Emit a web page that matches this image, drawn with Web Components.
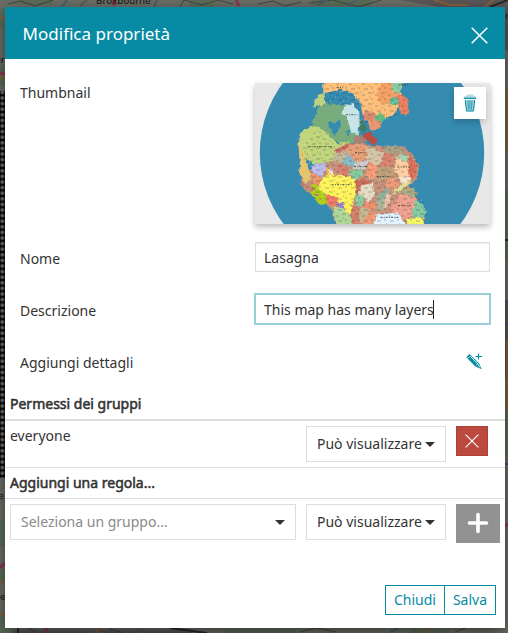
<!DOCTYPE html>
<html lang="it">
<head>
<meta charset="utf-8">
<title>Modifica proprietà</title>
<style>
html,body{margin:0;height:100%;overflow:hidden}
body{font:14px/20px "Noto Sans",sans-serif;color:#333;background:#5b5e55}
</style>
</head>
<body>
<property-page></property-page>
<script>
const define=(name,html)=>{
  const t=document.createElement('template');t.innerHTML=html;
  customElements.define(name,class extends HTMLElement{
    constructor(){super();this.attachShadow({mode:'open'}).append(t.content.cloneNode(true))}
  });
};

/* Dimmed street map behind the dialog */
define('map-backdrop',`<style>:host{display:block;width:508px;height:633px}svg{display:block}text{font:9.5px "DejaVu Sans",sans-serif;fill:#151515}</style>
<svg width="508" height="633" fill="none">
<defs><pattern id="d" width="4.6" height="5.6" patternUnits="userSpaceOnUse"><rect width="5" height="6" fill="#080808"/><circle cx="2.3" cy="2.8" r="1.9" fill="#707070"/></pattern></defs>
<rect width="508" height="633" fill="#6b6e66"/>
<path d="M0 8h5v20H0zM0 66h5v20H0zM20 0h32v4H20zM190 0h24v7h-24zM312 0h60v6h-60zM0 520h5v26H0zM0 570h5v12H0zM0 616h12v17H0zM505 190h3v70h-3zM505 395h3v60h-3zM225 629h70v4h-70zM410 629h40v4h-40z" fill="#5b6d59"/>
<path d="M400 0h108v50h-3V7H440zM505 300h3v80h-3zM12 630h180v3H12z" fill="#5b5658"/>
<path d="M8 4l12-3 15 5 18-6M80 6l7-6M180 7l4-7 18 5 16-5 15 4M258 4l15-3 12 5 16-4M309 3l24-3 25 7 23-7M28 628l10 5M110 629l12 4M300 632l16-4 20 4M455 632l11-4" stroke="#41463f"/>
<path d="M62 7l5-7M154 7l3-7M318 5l10-5M348 6l8-6M390 632l9-4M138 633l4-5" stroke="#49616b" stroke-width="2"/>
<path d="M0 17q5 0 5 7M0 80l5-8M434 0l16 5h18M484 7l10-7M0 585l5-7M0 613l14 5M96 633l5-6M507 90v60M507 340v70M426 633l3-6" stroke="#87613a" stroke-width="2"/>
<path d="M236 0l3 6M114 6V0M0 73l5 1M0 568l5-5M45 633l2-6M505 525h3" stroke="#8b3851" stroke-width="3"/>
<path d="M490 7l18-7M18 633v-5M170 628l37 5M505 240h3" stroke="#282a2b" stroke-width="2"/>
<path d="M505 302h3M505 324h3M505 464h3" stroke="#354f91" stroke-width="2"/>
<rect y="91" width="5" height="387" fill="url(#d)"/>
<text x="96" y="4">Broxbourne</text><text x="-5" y="63">er</text><text x="-2" y="499">e.</text><text x="0" y="600">e</text><text x="505" y="19">n</text>
</svg>`);

/* Circular political map used as the resource thumbnail */
define('map-thumbnail',`<style>:host{display:grid;width:235px;height:141px;box-shadow:0 3px 6px rgba(0,0,0,.16),0 3px 6px rgba(0,0,0,.12);box-sizing:border-box}svg{grid-area:1/1;display:block}.a{grid-area:1/1;justify-self:end;padding:4px;z-index:1}</style>
<svg width="235" height="141" viewBox="255 83 235 141">
<defs>
<pattern id="n" width="39" height="33" patternUnits="userSpaceOnUse"><path d="M0 6h12M21 12h9M9 24h6M27 27h12M15 3h3M3 18h3" stroke="#273238" stroke-width="3" stroke-opacity=".32"/><path d="M18 18h3M33 3h3M3 30h3" stroke="#fff6bd" stroke-width="3" stroke-opacity=".4"/></pattern>
<filter id="r" filterUnits="userSpaceOnUse" x="0" y="-20" width="430" height="480" color-interpolation-filters="sRGB"><feTurbulence type="fractalNoise" baseFrequency=".08" numOctaves="3" seed="8"/><feDisplacementMap in="SourceGraphic" scale="13" xChannelSelector="R" yChannelSelector="G"/></filter>
<clipPath id="c"><path d="M255 83h235v141H255z"/></clipPath>
</defs>
<path d="M255 83h235v141H255z" fill="#e8e8e8"/>
<g clip-path="url(#c)"><ellipse cx="372" cy="153" rx="112.2" ry="115" fill="#358bb0"/>
<g transform="translate(290 80) scale(.33333)"><g filter="url(#r)">
<path d="M135 230l12-18 30-20 40-5 25 10 40 5 60-3 25 25 20 35-5 35-25 25 15 30 30 40v60H145l-20-60-35-35-45-20-15-45 30-20z" fill="#c5917a"/>
<path d="M100 -5h240l-15 80-15 32-48 12-44-13-6-37-28-33-38-6-46 10z" fill="#fdbf79"/>
<path d="M280 -5h48l-8 45-20 32-28-2-10-32z" fill="#f4a064"/>
<path d="M310 -5h25v38l-18 8-12-16z" fill="#8bcda1"/>
<path d="M325 40l20 8 15 30-12 30-18-10-4-22-18-18z" fill="#e9805f"/>
<path d="M300 55l25-3 3 18-26 8z" fill="#67bc96"/>
<path d="M222 90l30 6 12 18-18 14-25-8z" fill="#da8a72"/><path d="M268 98l14 6 2 16-25 8-2-18z" fill="#5cc180"/>
<path d="M232 118l45 5-8 22-28 8z" fill="#ea9671"/><path d="M205 115l15 8 10 25-14 10-12-20z" fill="#417a67"/>
<path d="M85 45l20-7v35l-33 10 2-25z" fill="#bdd180"/>
<path d="M105 72l65 4 28 25 10 65-15 24-38 3-90-55 18-54z" fill="#78ac7c"/>
<path d="M120 122l17 10 12-17 4 22-20 30-8-19-10-6zM168 148l20 6-15 14z" fill="#358bb0"/>
<path d="M163 77l26-8 19 28 1 42-8 27-20-13-7-32-17-20z" fill="#c7e5e8"/>
<path d="M62 137l28 5 52 47 42-5-36 26-12 30-60 14-40-26-10-42 8-30z" fill="#c1d57c"/>
<path d="M24 170l8 35 16 32 16 60-16 14-22-28 4-25z" fill="#e4c570"/>
<path d="M66 255l40-6 4 18-18 26-24-17z" fill="#bcbbed"/><path d="M65 278l28 13-5 25-20-2z" fill="#ec9668"/>
<path d="M64 312l24 6 18 30 12 22-26 5-28-32z" fill="#adcf16"/>
<path d="M106 265l12 4 6 14-10 5z" fill="#f5b52b"/><path d="M115 268l15 4-3 12-12-3z" fill="#fbdde9"/>
<path d="M98 292l30-14 8 12 26-17 4 16 31 8-2 48-12 58-26-6-22-45-35-14-16-16z" fill="#fff35d"/>
<path d="M108 341l35 12 4 18-16 7-20-8z" fill="#ef7c63"/><path d="M136 365l22 4 10 18-18-2z" fill="#9a7dcc"/><path d="M126 378l30 6 28 24 4 35h-46z" fill="#aed697"/>
<path d="M135 208l42-19-2 12-36 25z" fill="#cc6f63"/>
<path d="M137 220l36-10-3 40-25-2-17-8z" fill="#c3b79a"/><path d="M176 220l22 30-8 14-35-14z" fill="#85bac9"/>
<path d="M165 208l30-16 38 3 0 38-30 14-28-26z" fill="#e89f78"/>
<path d="M186 260l14-18 38 0-12 24-28 5z" fill="#cfcbcc"/>
<path d="M233 200l48 20-12 38-32-12-8-14z" fill="#d3c5a6"/><path d="M281 218l34 8-9 38-34-5z" fill="#da8370"/>
<path d="M241 244l22 17-10 36-28-10z" fill="#f99d75"/><path d="M262 265l47-6 5 40-60 3z" fill="#bda079"/>
<path d="M145 252l32 8 4 24-20 5-20-20z" fill="#d77f6c"/><path d="M180 270l36-2 5 18-30 13-15-16z" fill="#86ca9b"/>
<path d="M196 304l28-7 30 16-34 5-20 28z" fill="#c96c5a"/><path d="M215 316l34-7 4 38-18 18-30-27z" fill="#e6dcc6"/>
<path d="M197 340l20 6 2 34-22-4z" fill="#86cea1"/><path d="M184 376l22 4v65h-23z" fill="#d57e69"/><path d="M217 372l25-8 20 10-16 16-24-1z" fill="#f08f6b"/>
<path d="M207 385l27 0 10 30-34 18z" fill="#c4b58e"/><path d="M240 396l20-2-8 32-28 22-8-18z" fill="#f09a74"/>
<path d="M262 345l32-22 4 22-38 38z" fill="#93b098"/><path d="M290 297l22-4 20 18-20 20-24-10z" fill="#eb9b78"/>
<path d="M261 368l24-10-3 36-20-3z" fill="#abb497"/><path d="M288 345l16-3-4 25-22 24z" fill="#e7c2ad"/>
<path d="M278 200l40-6 22 12-4 15-34 2-22-12z" fill="#aaa084"/><path d="M330 222l25 6-6 22-33-15z" fill="#a9d0b1"/>
<path d="M318 232l50 24-4 28-30 14-20-22z" fill="#fecda2"/><path d="M356 222l24 34-4 34-16 8-5-22 4-30z" fill="#de6d59"/>
<path d="M324 292l34-2 6 14-24 15z" fill="#f7e6ca"/><path d="M312 330l46-27 5 6-52 36z" fill="#dae193"/>
<path d="M340 325l30-2 14 18-16 12-46 0z" fill="#aaa983"/>
<path d="M330 340l50 18-6 46-34 14-34-30z" fill="#f0a08f"/><path d="M300 380l28-18 36 20-16 30-30-4z" fill="#f0a08f"/>
<path d="M376 360l24 14 10 28-18 18-26-10z" fill="#84c99f"/>
<path d="M256 404l68-6 32 46h-105z" fill="#e2f4ff"/><path d="M350 416l48-4 6 34h-50z" fill="#f6f765"/>
<path d="M220 160l22-3 20 24-8 14-34-20z" fill="#b84f47"/><path d="M192 168l24-2 14 18-20 7-20-5z" fill="#aa8175"/><path d="M255 195l20 3 8 10-25 0z" fill="#d68b75"/>
<path d="M34 310l32 18 25 30" fill="none" stroke="#bb7d70" stroke-width="8" stroke-dasharray="10 7"/>
</g>
<path d="M102 10h226l28 80-45 22-60 25-45-10-10-50-90-8-30 80 20 0 40 50 10-10 60 0 40 5 40 5 60-3 45 60-5 35-25 25 40 50 6 70H145l-20-60-60-45-5-60-26-50 8-35 30-28 25-55z" fill="url(#n)"/>
<path d="M55 200h70M168 104h30M125 314h60M192 260h40M195 218h34M322 261h40M260 290h42M324 377h38M271 412h55M140 22h18M326 15h30" stroke="#26362d" stroke-width="3" stroke-dasharray="6 4 3 3" stroke-opacity=".8"/>
</g></g>
</svg><div class="a"><slot></slot></div>`);

define('trash-button',`<style>:host{display:grid;place-items:center;width:32px;height:32px;background:#fff;box-shadow:0 3px 6px rgba(0,0,0,.2)}svg{display:block}</style>
<svg width="14" height="18" viewBox="0 0 14 18"><path d="M3.5 2.5V1q0-.6.6-.6h5.8q.6 0 .6.6v1.5z" fill="#b5dbe2"/><path d="M1.5 2.5h11l1 1.7H.5z" fill="#85c3ce"/><path d="M2 6h10l-1.2 11.2H3.2z" fill="#a4d3dc"/><path d="M.8 4.6h12.4M2.3 6l1.2 11h7l1.2-11" fill="none" stroke="#078aa3" stroke-width="1"/><path d="M5 6.5l.4 9M7 6.5v9M9 6.5l-.4 9" stroke="#078aa3" stroke-width=".8"/></svg>`);

define('dialog-header',`<style>:host{display:flex;justify-content:space-between;align-items:center;height:52px;box-sizing:border-box;padding:2px 17px 0 17.6px;background:#078aa3;color:#fff;font-size:17px}svg{display:block;margin-top:2px}</style>
<span><slot></slot></span><svg width="17" height="17"><path d="M.7.7l15.6 15.6M16.3.7L.7 16.3" stroke="#fff" stroke-width="1.5"/></svg>`);

define('form-row',`<style>:host{display:grid;grid-template-columns:235px 235px;align-items:start;height:52px;padding-left:15px}.l{padding-top:7px}:host([media]) .l{padding-top:0}:host([media]){height:159px}</style>
<div class="l"><slot name="label"></slot></div><slot></slot>`);

define('text-field',`<style>:host{display:flex;align-items:center;height:30px;box-sizing:border-box;border:1px solid #ddd;padding:1px 8px 0;box-shadow:inset 0 1px 1px rgba(0,0,0,.075)}:host([focused]){border-color:#9acfda;box-shadow:0 0 0 1px #9acfda}:host([focused])::after{content:"";width:1px;height:19px;background:#222;margin-left:-1px}</style><slot></slot>`);

define('edit-icon',`<style>:host{display:block;justify-self:end;margin:7px 7px 0 0}svg{display:block}</style>
<svg width="17" height="17" viewBox="0 0 17 17"><path d="M.3 4.2L3.5.9l9.4 9.4 2.9 6-6.4-2.9z" fill="#078aa3"/><path d="M4.4 3.4l7.1 7.2M1.7 5.6l2-2M10.2 12.2l1.8-1.8M12.2 11.5l1.5 2.8" stroke="#fff" stroke-width=".9"/><path d="M12.5.5v6M9.5 3.5h6.5" stroke="#078aa3" stroke-width="1.2"/></svg>`);

define('section-title',`<style>:host{display:block;padding:0 5px;box-sizing:border-box;-webkit-text-stroke:.55px #333;border-bottom:1px solid #ddd;height:31px;padding-top:5px}:host([first]){height:27px;padding-top:0;border-bottom-width:2px}</style><slot></slot>`);

define('rule-row',`<style>:host{display:grid;grid-template-columns:286px 140px 44px;column-gap:10px;padding:5px;align-items:start;box-sizing:border-box}:host([lined]){height:47px;border-bottom:1px solid #ddd}</style><slot></slot>`);

define('select-box',`<style>:host{display:flex;align-items:center;justify-content:space-between;height:36px;box-sizing:border-box;border:1px solid #ddd;padding:0 10px}:host([placeholder]){color:#8a8a8a}i{width:0;height:0;border:5px solid transparent;border-top-color:#333;border-bottom:0}</style><span><slot></slot></span><i></i>`);

define('remove-button',`<style>:host{display:grid;place-items:center;width:32px;height:30px;box-sizing:border-box;background:#bb493e;border:1px solid #ad4137}svg{display:block}</style><svg width="14" height="14"><path d="M.6.6l12.8 12.8M13.4.6L.6 13.4" stroke="#fff" stroke-width="1.2"/></svg>`);
define('add-button',`<style>:host{display:grid;place-items:center;width:44px;height:39px;box-sizing:border-box;padding-bottom:1px;background:#929292}svg{display:block}</style><svg width="22" height="22"><path d="M11 2.5v17M2.5 11h17" stroke="#fff" stroke-width="3.6" stroke-linecap="round"/></svg>`);
define('action-button',`<style>:host{display:flex;align-items:center;justify-content:center;height:30px;width:60px;box-sizing:border-box;border:1px solid #078aa3;color:#078aa3}:host([last]){width:52px;margin-left:-1px}</style><slot></slot>`);

define('property-dialog',`<style>:host{display:flex;flex-direction:column;width:500px;height:621px;background:#fff;box-shadow:0 5px 15px rgba(0,0,0,.5)}.form{padding-top:24px;height:311px}footer{display:flex;justify-content:flex-end;margin-top:auto;padding:0 9px 13px}</style>
<dialog-header><slot name="title"></slot></dialog-header><div class="form"><slot name="form"></slot></div><slot></slot><footer><slot name="actions"></slot></footer>`);

define('property-page',`<style>:host{display:grid;width:508px;height:633px}map-backdrop,property-dialog{grid-area:1/1}property-dialog{margin:7px 0 0 5px;z-index:1}</style>
<map-backdrop></map-backdrop>
<property-dialog><span slot="title">Modifica proprietà</span>
<form-row slot="form" media><span slot="label">Thumbnail</span><map-thumbnail><trash-button></trash-button></map-thumbnail></form-row>
<form-row slot="form"><span slot="label">Nome</span><text-field>Lasagna</text-field></form-row>
<form-row slot="form"><span slot="label">Descrizione</span><text-field focused>This map has many layers</text-field></form-row>
<form-row slot="form"><span slot="label">Aggiungi dettagli</span><edit-icon></edit-icon></form-row>
<section-title first>Permessi dei gruppi</section-title>
<rule-row lined><span>everyone</span><select-box>Può visualizzare</select-box><remove-button></remove-button></rule-row>
<section-title>Aggiungi una regola...</section-title>
<rule-row><select-box placeholder>Seleziona un gruppo...</select-box><select-box>Può visualizzare</select-box><add-button></add-button></rule-row>
<action-button slot="actions">Chiudi</action-button><action-button last slot="actions">Salva</action-button>
</property-dialog>`);
</script>
</body>
</html>
